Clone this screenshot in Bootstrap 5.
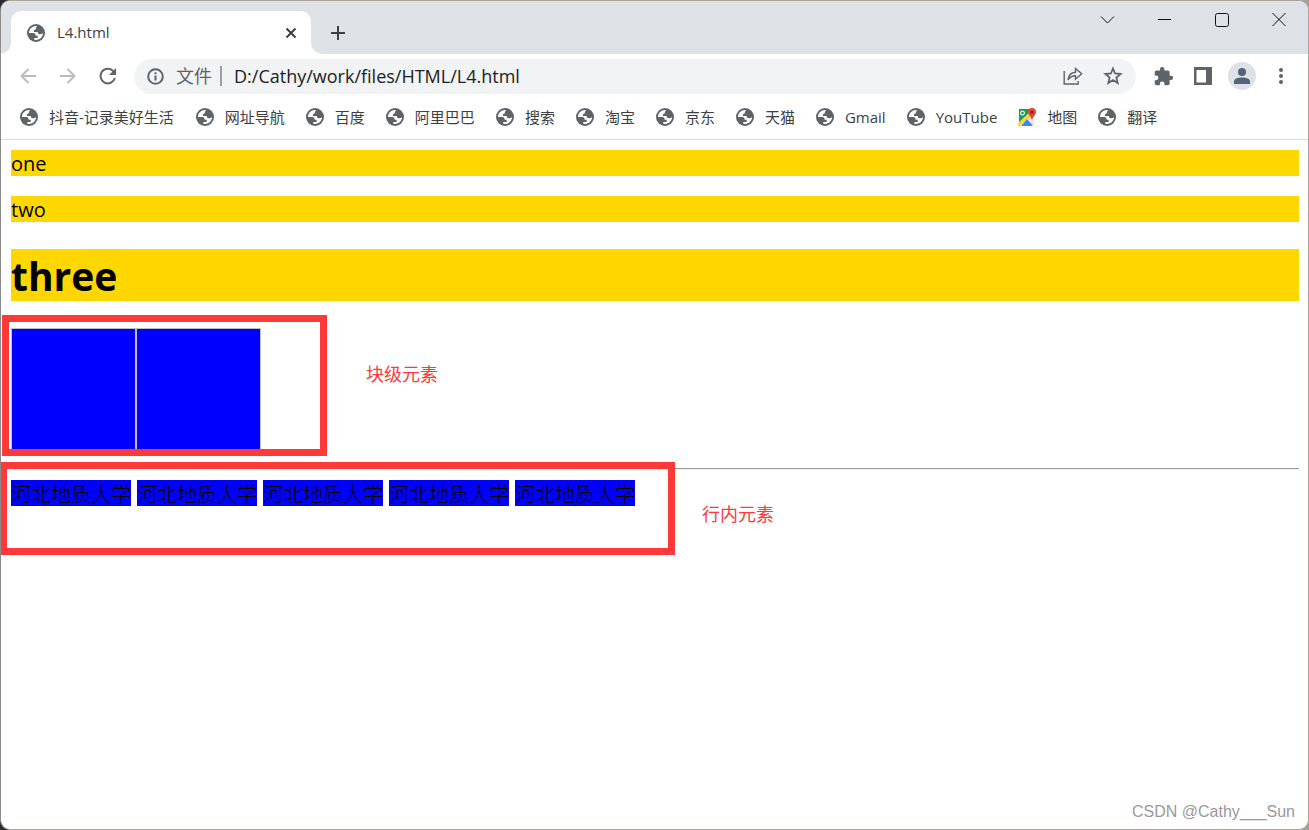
<!DOCTYPE html>
<html lang="zh-CN">
<head>
<meta charset="utf-8">
<meta name="viewport" content="width=device-width, initial-scale=1">
<title>L4.html</title>
<link href="https://cdn.jsdelivr.net/npm/bootstrap@5.3.0/dist/css/bootstrap.min.css" rel="stylesheet">
<script src="https://cdn.jsdelivr.net/npm/bootstrap@5.3.0/dist/js/bootstrap.bundle.min.js"></script>
<style>
body{font-family:"Open Sans","Noto Sans CJK SC",sans-serif;background:linear-gradient(90deg,#2b2c30 104px,#a5a399 104px);color:#000}
svg{display:block;flex:none}
button{border:0;background:none;padding:0;color:#5f6368}
.window{border:1px solid #aaa69c;border-left-color:#8b8b8b;border-radius:10px;overflow:hidden;background:#fff}
.tabstrip{background:#dee1e6;height:53px;padding:10px 0 0 10px}
.tab{width:300px;height:43px;background:#fff;border-radius:10px 10px 0 0;font-size:15px;color:#3c4043;padding:0 13px 0 16px;position:relative}
.tab::before,.tab::after{content:"";position:absolute;bottom:0;width:10px;height:10px}
.tab::before{left:-10px;background:radial-gradient(circle at 0 0,transparent 9px,#fff 10px)}
.tab::after{right:-10px;background:radial-gradient(circle at 100% 0,transparent 9px,#fff 10px)}
.controls{gap:42px;height:18px;padding-right:22px}
.toolbar{height:44px;padding:0 18px}
.history{gap:22px}
.omnibox{background:#f1f3f4;border-radius:18px;height:35px;padding:0 13px;margin:0 17px}
.omnibox input{border:0;background:none;outline:0;font-size:18px;line-height:26px;color:#202124;padding:0}
.scheme{font-size:18px;line-height:26px;color:#5f6368}
.divider{width:2px;height:20px;background:#9aa0a6}
.avatar{width:28px;height:28px;border-radius:50%;background:#dee1e6}
.bookmarks{height:42px;gap:21px;padding:0 19px 3px;border-bottom:1px solid #dadce0}
.bookmarks a{gap:11px;font-size:15px;line-height:20px;color:#3c4043}
.bookmarks a:first-child{margin-right:1px}
.page{padding:10px 9px 0 10px;font-size:20px;line-height:26px}
.gold{background:#ffd700;margin:0 0 20px}
.gold,.blue{padding-top:2px;line-height:24px}
h1.gold{font-size:39px;line-height:50px;font-weight:700;margin:27px 0}
.tile{width:125px;height:125px;background:#00f;border:1px solid silver}
.rule{height:2px;background:#eee;border-top:1px solid #999;margin:15px 0 10px}
.words{gap:6px}
.blue{background:#00f;font-weight:300;font-family:"Noto Sans CJK SC",sans-serif}
.frame{position:absolute;border:7px solid #ff3838;pointer-events:none}
.frame-block{inset:-13px auto auto -9px;width:325px;height:141px}
.frame-inline{inset:-18px auto auto -11px;width:675px;height:93px}
.note{position:absolute;left:100%;white-space:nowrap;font-size:18px;line-height:26px;color:#ff3838}
.frame-block .note{top:39px;margin-left:46px}
.frame-inline .note{top:32px;margin-left:34px}
.watermark{font-family:"Liberation Sans",sans-serif;font-size:16px;line-height:20px;color:#999;padding:0 13px 7px}
</style>
</head>
<body>
<svg width="0" height="0" class="position-absolute" aria-hidden="true">
<symbol id="globe" viewBox="0 0 18 18"><circle cx="9" cy="9" r="9" fill="#5f6368"/><path fill="#fff" d="M10.3 2.1C5.8 1.4 2 4.7 2 9h4.1c1.5 0 2.5.8 2.5 2.2v.5h2.1v2.2H7.3v1.8c4.7 1.1 8.7-2.3 8.7-6.7-.9 1-1.8 1.4-3.2 1.2-1.4-.1-2-.9-2.1-2.3H7.2C6.2 7 6.9 5.6 8.700 5.500c.2-1.500.5-2.600 1.600-3.400z"/></symbol>
</svg>
<div class="window d-flex flex-column min-vh-100">
<header>
<div class="tabstrip d-flex">
<div class="tab d-flex align-items-center">
<svg width="18" height="18"><use href="#globe"/></svg>
<span class="ms-2 ps-1 flex-grow-1">L4.html</span>
<button aria-label="关闭标签页"><svg width="14" height="14" viewBox="0 0 14 14" stroke="#3c4043" stroke-width="2"><path d="M2.500 2.500l9 9M11.500 2.500l-9 9"/></svg></button>
</div>
<button class="ms-3 ps-1 align-self-center" aria-label="新标签页"><svg width="16" height="16" viewBox="0 0 16 16" stroke="#3c4043" stroke-width="2"><path d="M7 1v14M0 8h14"/></svg></button>
<div class="controls d-flex align-items-center ms-auto">
<button aria-label="搜索标签页"><svg width="16" height="16" viewBox="0 0 16 16" fill="none" stroke="#111"><path d="M2 4.500l6.500 6.500L15 4.500"/></svg></button>
<button aria-label="最小化"><svg width="15" height="16" viewBox="0 0 15 16" stroke="#111"><path d="M1 7.500h13"/></svg></button>
<button aria-label="最大化"><svg width="16" height="16" viewBox="0 0 16 16" fill="none" stroke="#111"><rect x="1.500" y="1.500" width="13" height="13" rx="2"/></svg></button>
<button aria-label="关闭"><svg width="14" height="16" viewBox="0 0 14 16" stroke="#111"><path d="M.5 1l13 13M13.500 1l-13 13"/></svg></button>
</div>
</div>
<div class="toolbar d-flex align-items-center">
<div class="history d-flex">
<button aria-label="后退"><svg width="18" height="18" viewBox="0 0 18 18" fill="none" stroke="#babcbe" stroke-width="2"><path d="M17 9H3M9.500 2L2.500 9l7 7"/></svg></button>
<button aria-label="前进"><svg width="18" height="18" viewBox="0 0 18 18" fill="none" stroke="#babcbe" stroke-width="2"><path d="M1 9h14M8.500 2l7 7-7 7"/></svg></button>
<button aria-label="重新加载"><svg width="18" height="18" viewBox="0 0 18 18"><path d="M14.500 4.400A7.300 7.300 0 1 0 15.900 11" fill="none" stroke="#5f6368" stroke-width="2"/><path d="M17 1v7h-7z" fill="#5f6368"/></svg></button>
</div>
<div class="omnibox d-flex align-items-center flex-grow-1">
<svg width="17" height="17" viewBox="0 0 17 17" fill="none" stroke="#5f6368" stroke-width="2"><circle cx="8.500" cy="8.500" r="7.300"/><path d="M8.500 7.500v5M8.500 4.200v2"/></svg>
<label for="url" class="scheme ms-2 ps-1">文件</label><span class="divider ms-2"></span>
<input id="url" class="flex-grow-1 ms-2 ps-1" value="D:/Cathy/work/files/HTML/L4.html">
<button aria-label="分享"><svg width="20" height="20" viewBox="0 0 20 20" fill="none" stroke="#5f6368" stroke-width="1.400"><path d="M1.200 5v13h14v-3M5 14c.5-5 3-7.500 7.500-7.800V2.500l6.200 5.300-6.200 5.400V9.800C9 9.900 6.800 11 5 14z"/></svg></button>
<button class="ms-3 ps-1" aria-label="收藏"><svg width="20" height="20" viewBox="0 0 20 20" fill="none" stroke="#5f6368" stroke-width="1.800"><path d="M10 2.500l2.100 5 5.500.5-4.200 3.600 1.300 5.400-4.700-2.900L5.300 17l1.300-5.400L2.400 8l5.500-.5z"/></svg></button>
</div>
<button aria-label="扩展程序"><svg width="21" height="21" viewBox="0 0 24 24" fill="#5f6368"><path d="M20.500 11H19V7c0-1.100-.9-2-2-2h-4V3.500a2.500 2.500 0 0 0-5 0V5H4c-1.100 0-2 .9-2 2v3.800h1.500a2.700 2.700 0 0 1 0 5.400H2V20c0 1.100.9 2 2 2h3.800v-1.500a2.700 2.700 0 0 1 5.400 0V22H17c1.100 0 2-.9 2-2v-4h1.500a2.500 2.500 0 0 0 0-5z"/></svg></button>
<button class="ms-3 ps-1" aria-label="侧边栏"><svg width="18" height="18" viewBox="0 0 18 18"><path fill="#5f6368" fill-rule="evenodd" d="M0 0h18v18H0zM2.500 3v12.500h9.500V3z"/></svg></button>
<button class="avatar ms-3" aria-label="个人资料"><svg class="mx-auto" width="16" height="16" viewBox="0 0 16 16" fill="#56617a"><circle cx="8" cy="4" r="4"/><path d="M0 16v-2.500C0 10.500 4 9.500 8 9.500s8 1 8 4V16z"/></svg></button>
<button class="ms-3" aria-label="菜单"><svg width="18" height="18" viewBox="0 0 18 18" fill="#5f6368"><circle cx="9" cy="3" r="2"/><circle cx="9" cy="9" r="2"/><circle cx="9" cy="15" r="2"/></svg></button>
</div>
<nav class="bookmarks d-flex align-items-center text-nowrap" aria-label="书签">
<a href="#" class="d-flex align-items-center text-decoration-none"><svg width="18" height="18"><use href="#globe"/></svg>抖音-记录美好生活</a>
<a href="#" class="d-flex align-items-center text-decoration-none"><svg width="18" height="18"><use href="#globe"/></svg>网址导航</a>
<a href="#" class="d-flex align-items-center text-decoration-none"><svg width="18" height="18"><use href="#globe"/></svg>百度</a>
<a href="#" class="d-flex align-items-center text-decoration-none"><svg width="18" height="18"><use href="#globe"/></svg>阿里巴巴</a>
<a href="#" class="d-flex align-items-center text-decoration-none"><svg width="18" height="18"><use href="#globe"/></svg>搜索</a>
<a href="#" class="d-flex align-items-center text-decoration-none"><svg width="18" height="18"><use href="#globe"/></svg>淘宝</a>
<a href="#" class="d-flex align-items-center text-decoration-none"><svg width="18" height="18"><use href="#globe"/></svg>京东</a>
<a href="#" class="d-flex align-items-center text-decoration-none"><svg width="18" height="18"><use href="#globe"/></svg>天猫</a>
<a href="#" class="d-flex align-items-center text-decoration-none"><svg width="18" height="18"><use href="#globe"/></svg>Gmail</a>
<a href="#" class="d-flex align-items-center text-decoration-none"><svg width="18" height="18"><use href="#globe"/></svg>YouTube</a>
<a href="#" class="d-flex align-items-center text-decoration-none"><svg width="18" height="18" viewBox="0 0 18 18"><path fill="#1a9d55" d="M1 1h12l-5 8-7 7z"/><path fill="#e4e6e8" d="M9 9l7-2v10H9z"/><path fill="#ffd43b" d="M0 15L12 4l2 6-5 1-7 7H0z"/><path fill="#4285f4" d="M9 11l6 7H3z"/><circle cx="4.500" cy="5" r="1.900" fill="none" stroke="#d9f0e2" stroke-width="1.200"/><path fill="#e5433a" d="M14 0a4 4 0 0 1 4 4c0 3-3 4-4 8-1-4-4-5-4-8a4 4 0 0 1 4-4z"/><circle cx="14" cy="4" r="1.500" fill="#7d1f1b"/></svg>地图</a>
<a href="#" class="d-flex align-items-center text-decoration-none"><svg width="18" height="18"><use href="#globe"/></svg>翻译</a>
</nav>
</header>
<main class="page flex-grow-1">
<div class="gold">one</div>
<p class="gold">two</p>
<h1 class="gold">three</h1>
<section class="position-relative d-flex">
<div class="tile"></div><div class="tile"></div>
<div class="frame frame-block"><span class="note">块级元素</span></div>
</section>
<div class="rule"></div>
<section class="position-relative d-flex text-nowrap">
<div class="words d-flex"><span class="blue">河北地质大学</span><span class="blue">河北地质大学</span><span class="blue">河北地质大学</span><span class="blue">河北地质大学</span><span class="blue">河北地质大学</span></div>
<div class="frame frame-inline"><span class="note">行内元素</span></div>
</section>
</main>
<footer class="watermark text-end">CSDN @Cathy___Sun</footer>
</div>
</body>
</html>
